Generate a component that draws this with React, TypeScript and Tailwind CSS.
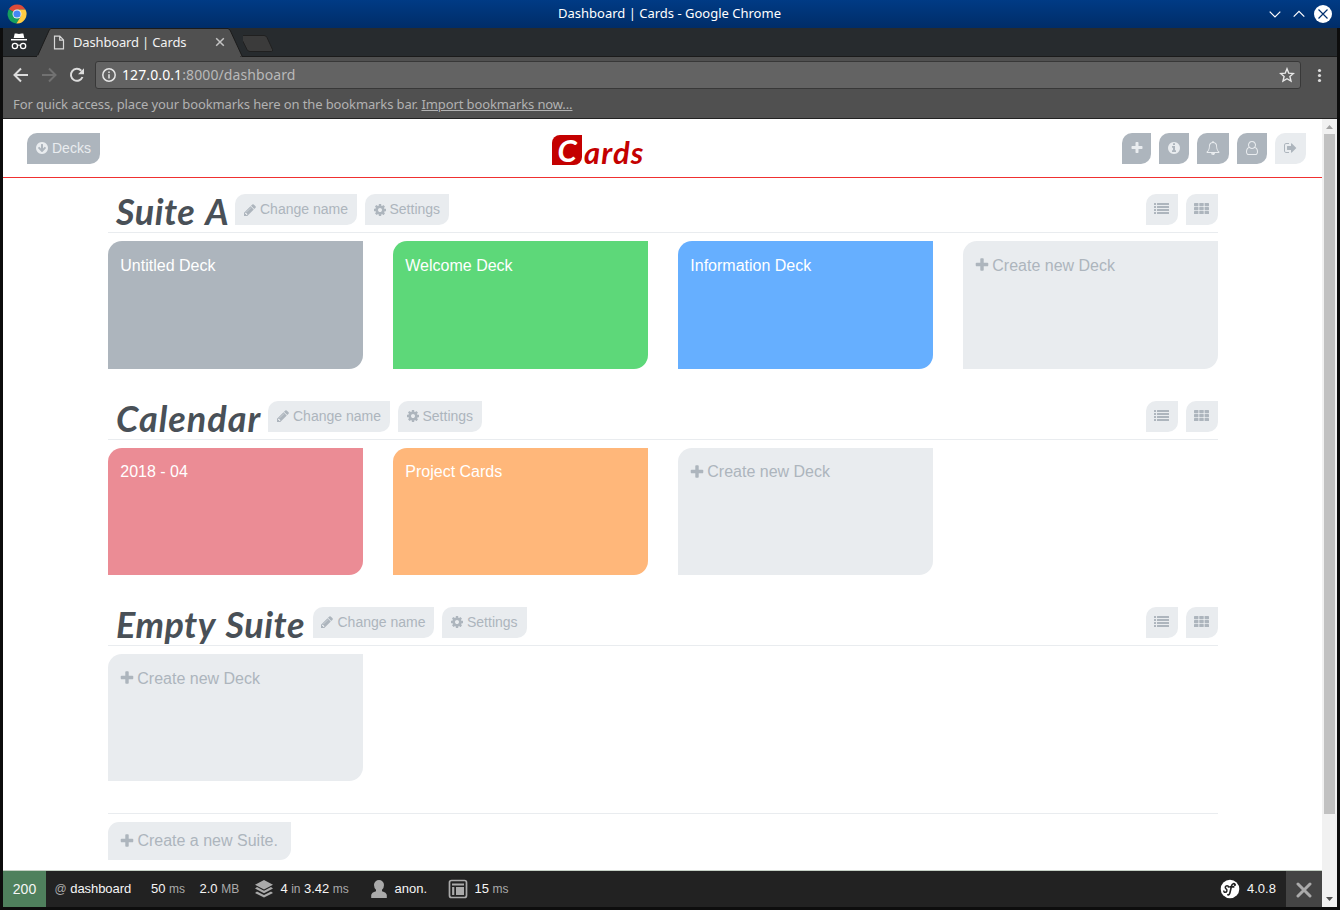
import React from "react";

const PLUS =
  "M1600 736v192q0 40-28 68t-68 28h-416v416q0 40-28 68t-68 28h-192q-40 0-68-28t-28-68v-416h-416q-40 0-68-28t-28-68v-192q0-40 28-68t68-28h416v-416q0-40 28-68t68-28h192q40 0 68 28t28 68v416h416q40 0 68 28t28 68z";
const INFO =
  "M1152 1376v-160q0-14-9-23t-23-9h-96v-512q0-14-9-23t-23-9h-320q-14 0-23 9t-9 23v160q0 14 9 23t23 9h96v320h-96q-14 0-23 9t-9 23v160q0 14 9 23t23 9h448q14 0 23-9t9-23zm-128-896v-160q0-14-9-23t-23-9h-192q-14 0-23 9t-9 23v160q0 14 9 23t23 9h192q14 0 23-9t9-23zm640 416q0 209-103 385.5t-279.5 279.5-385.5 103-385.5-103-279.5-279.5-103-385.5 103-385.5 279.5-279.5 385.5-103 385.5 103 279.5 279.5 103 385.5z";
const ARROW_DOWN =
  "M1412 897q0-27-18-45l-91-91q-18-18-45-18t-45 18l-189 189v-502q0-26-19-45t-45-19h-128q-26 0-45 19t-19 45v502l-189-189q-19-19-45-19t-45 19l-91 91q-18 18-18 45t18 45l362 362 91 91q18 18 45 18t45-18l91-91 362-362q18-18 18-45zm252-1q0 209-103 385.5t-279.5 279.5-385.5 103-385.5-103-279.5-279.5-103-385.5 103-385.5 279.5-279.5 385.5-103 385.5 103 279.5 279.5 103 385.5z";
const BELL =
  "M912 1696q0-16-16-16-59 0-101.5-42.5t-42.5-101.5q0-16-16-16t-16 16q0 73 51.5 124.5t124.5 51.5q16 0 16-16zm-666-288h1300q-266-300-266-832 0-51-24-105t-69-103-121.5-80.5-169.5-31.5-169.5 31.5-121.5 80.5-69 103-24 105q0 532-266 832zm1482 0q0 52-38 90t-90 38h-448q0 106-75 181t-181 75-181-75-75-181h-448q-52 0-90-38t-38-90q50-42 91-88t85-119.5 74.5-158.5 50-206 19.5-260q0-152 117-282.5t307-158.5q-8-19-8-39 0-40 28-68t68-28 68 28 28 68q0 20-8 39 190 28 307 158.5t117 282.5q0 139 19.5 260t50 206 74.5 158.5 85 119.5 91 88z";
const USER =
  "M1201 784q47 14 89.5 38t89 73 79.5 115.5 55 172 22 236.5q0 154-100 263.5t-241 109.5h-854q-141 0-241-109.5t-100-263.5q0-131 22-236.5t55-172 79.5-115.5 89-73 89.5-38q-79-125-79-272 0-104 40.5-198.5t109.5-163.5 163.5-109.5 198.5-40.5 198.5 40.5 163.5 109.5 109.5 163.5 40.5 198.5q0 147-79 272zm-433-656q-159 0-271.5 112.5t-112.5 271.5 112.5 271.5 271.5 112.5 271.5-112.5 112.5-271.5-112.5-271.5-271.5-112.5zm427 1536q88 0 150.5-71.5t62.5-173.5q0-239-78.5-377t-225.5-145q-145 127-336 127t-336-127q-147 7-225.5 145t-78.5 377q0 102 62.5 173.5t150.5 71.5h854z";
const SIGN_OUT =
  "M704 1440q0 4 1 20t.5 26.5-3 23.5-10 19.5-20.5 6.5h-320q-119 0-203.5-84.5t-84.5-203.5v-704q0-119 84.5-203.5t203.5-84.5h320q13 0 22.5 9.5t9.5 22.5q0 4 1 20t.5 26.5-3 23.5-10 19.5-20.5 6.5h-320q-66 0-113 47t-47 113v704q0 66 47 113t113 47h312l11.5 1 11.5 3 8 5.5 7 9 2 13.5zm928-544q0 26-19 45l-544 544q-19 19-45 19t-45-19-19-45v-288h-448q-26 0-45-19t-19-45v-384q0-26 19-45t45-19h448v-288q0-26 19-45t45-19 45 19l544 544q19 19 19 45z";
const PENCIL =
  "M491 1536l91-91-235-235-91 91v107h128v128h107zm523-928q0-22-22-22-10 0-17 7l-542 542q-7 7-7 17 0 22 22 22 10 0 17-7l542-542q7-7 7-17zm-54-192l416 416-832 832h-416v-416zm683 96q0 53-37 90l-166 166-416-416 166-165q36-38 90-38 53 0 91 38l235 234q37 39 37 91z";
const COG =
  "M1152 896q0-106-75-181t-181-75-181 75-75 181 75 181 181 75 181-75 75-181zm512-109v222q0 12-8 23t-20 13l-185 28q-19 54-39 91 35 50 107 138 10 12 10 25t-9 23q-27 37-99 108t-94 71q-12 0-26-9l-138-108q-44 23-91 38-16 136-29 186-7 28-36 28h-222q-14 0-24.5-8.5t-11.5-21.5l-28-184q-49-16-90-37l-141 107q-10 9-25 9-14 0-25-11-126-114-165-168-7-10-7-23 0-12 8-23 15-21 51-66.5t54-70.5q-27-50-41-99l-183-27q-13-2-21-12.5t-8-23.5v-222q0-12 8-23t19-13l186-28q14-46 39-92-40-57-107-138-10-12-10-24 0-10 9-23 26-36 98.5-107.5t94.5-71.5q13 0 26 10l138 107q44-23 91-38 16-136 29-186 7-28 36-28h222q14 0 24.5 8.5t11.5 21.5l28 184q49 16 90 37l142-107q9-9 24-9 13 0 25 10 129 119 165 170 7 8 7 22 0 12-8 23-15 21-51 66.5t-54 70.5q26 50 41 98l183 28q13 2 21 12.5t8 23.5z";

function Glyph({ d, className, box = "0 0 1792 1792" }: { d: string; className: string; box?: string }) {
  return (
    <svg viewBox={box} className={`shrink-0 ${className}`} fill="currentColor">
      <path d={d} />
    </svg>
  );
}

function ChromeLogo() {
  return (
    <svg viewBox="0 0 20 20" className="-mt-px size-5">
      <path d="M10 10 L1.8 5.3 A9.4 9.4 0 0 1 18.4 5.6 L10 5.6Z" fill="#dd4b39" />
      <path d="M10 10 L1.8 5.3 A9.4 9.4 0 0 0 9.4 19.4 L13.8 12.2Z" fill="#17a05d" />
      <path d="M10 5.6 H18.4 A9.4 9.4 0 0 1 9.4 19.4 L13.8 12.2Z" fill="#ffcd42" />
      <circle cx="10" cy="10" r="4.5" fill="#f1f1f1" />
      <circle cx="10" cy="10" r="3.6" fill="#4587f3" />
    </svg>
  );
}

function TitleBar() {
  return (
    <div className="flex h-7 shrink-0 items-center bg-gradient-to-b from-[#003b85] to-[#002d68] pr-2 pl-[7px] text-white">
      <div className="flex w-[70px]"><ChromeLogo /></div>
      <div className="flex-1 pb-px text-center text-[13px]">Dashboard | Cards - Google Chrome</div>
      <div className="-mt-px flex w-[70px] items-center justify-end">
        <svg viewBox="0 0 64 20" className="h-5 w-16" fill="none" stroke="#fff" strokeWidth="1.2">
          <path d="M1.7 7.6 7 12.9l5.3-5.3M25.7 12.6 31 7.3l5.3 5.3" />
          <circle cx="55" cy="10" r="9" fill="#fff" stroke="none" />
          <path d="M50.5 5.5l9 9M59.5 5.5l-9 9" stroke="#003070" />
        </svg>
      </div>
    </div>
  );
}

function TabStrip() {
  return (
    <div className="flex h-[29px] shrink-0 bg-[#272b2e] shadow-[inset_0_-1px_0_#1b1b1b]">
      <svg viewBox="0 0 36 29" className="h-[29px] w-9" fill="none">
        <path d="M11.7 5.5h1.7l2.6.6 2.600-.6h1.7l1 4.500H10.700z" fill="#fff" />
        <path d="M8 11.7h16" stroke="#fff" strokeWidth="1.5" />
        <circle cx="11.9" cy="18" r="2.6" stroke="#fff" strokeWidth="1.3" />
        <circle cx="20.1" cy="18" r="2.6" stroke="#fff" strokeWidth="1.3" />
        <path d="M14.5 17.5q1.500-1 3 0" stroke="#fff" />
      </svg>
      <div className="relative -ml-1 h-[29px] w-[208px]">
        <svg viewBox="0 0 208 29" className="absolute inset-0 h-full w-full">
          <path d="M0 29 2.5 28 14.5 1.5 16 .5H193l2 1.5L207 28l1 1z" fill="#505050" stroke="#1b1b1b" />
          <path d="M2 28.500h203" stroke="#505050" strokeWidth="2" />
        </svg>
        <div className="relative flex h-full items-center pl-[18px] text-[13px] text-[#f2f2f2]">
          <svg viewBox="0 0 12 15" className="mr-[8px] h-[15px] w-3" fill="none" stroke="#d8d8d8" strokeWidth="1.2">
            <path d="M1.5 1.2h5.3l3.7 3.7v8.900h-9zM6.700 1.200v4h3.800" />
          </svg>
          <span className="w-[142px] pt-px tracking-[-0.16px]">Dashboard | Cards</span>
          <svg viewBox="0 0 10 10" className="-mt-px size-2.5" stroke="#c4c4c4" strokeWidth="1.5"><path d="m1.2 1.2 7.6 7.6m0-7.6L1.2 8.800" /></svg>
        </div>
      </div>
      <svg viewBox="0 0 36 29" className="h-[29px] w-9">
        <path d="M-1.5 7.500H21q2 0 3 2l5.500 12q.5 2-1 2H7q-2 0-3-2l-6-12z" fill="#3b3b3b" stroke="#202020" />
      </svg>
    </div>
  );
}

function AddressBar() {
  return (
    <div className="flex h-[33px] shrink-0 bg-[#505050]">
      <svg viewBox="0 0 92 33" className="h-[33px] w-[92px]" fill="none" strokeWidth="2">
        <path d="M25 18H12M18 11.500 11.500 18l6.500 6.500" stroke="#dcdcdc" />
        <path d="M39 18h13M46 11.500l6.500 6.500-6.500 6.500" stroke="#717171" />
        <path d="M79.500 20a6 6 0 1 1-1.200-6.300" stroke="#dcdcdc" />
        <path d="M81 11.300v6h-6z" fill="#dcdcdc" />
      </svg>
      <div className="mt-1 flex h-[28px] w-[1206px] items-center rounded-[3px] border border-[#383838] bg-[#636363] pr-[5px] pl-1.5 text-[14px]">
        <svg viewBox="0 0 14 14" className="mr-1.5 size-3.5" fill="none" stroke="#e6e6e6" strokeWidth="1.5">
          <circle cx="7" cy="7" r="6.2" /><path d="M7 6.200v4.300M7 3.400v1.600" />
        </svg>
        <span className="pb-0.5 tracking-[0.1px] text-white">127.0.0.1</span>
        <span className="flex-1 pb-0.5 tracking-[0.1px] text-[#b9b9b9]">:8000/dashboard</span>
        <svg viewBox="0 0 16 16" className="size-4" fill="none" stroke="#e8e8e8" strokeWidth="1.4">
          <path d="m8 1.800 1.700 4.300 4.700.4-3.500 3 1.100 4.600L8 11.700l-4 2.400 1.100-4.600-3.500-3 4.700-.4z" />
        </svg>
      </div>
      <svg viewBox="0 0 36 33" className="h-[33px] w-9" fill="#dcdcdc">
        <circle cx="18.5" cy="13.5" r="1.6" /><circle cx="18.5" cy="18.5" r="1.6" /><circle cx="18.5" cy="23.5" r="1.6" />
      </svg>
    </div>
  );
}

function LeafButton({ className, children }: { className: string; children: React.ReactNode }) {
  return (
    <button className={`flex h-[31px] items-center rounded-tl-[10px] rounded-br-[10px] text-[14px] whitespace-nowrap ${className}`}>
      {children}
    </button>
  );
}

function Header() {
  return (
    <header className="flex h-[59px] shrink-0 items-center border-b border-[#f03030] pr-4 pl-6">
      <LeafButton className="w-[73px] bg-[#adb5bd] pl-2 text-[#e9ecef]">
        <Glyph d={ARROW_DOWN} className="mr-[3px] size-3.5" />
        Decks
      </LeafButton>
      <div className="ml-[452px] flex h-[31px] items-start pt-0.5 font-[Lato] text-[31px] leading-[30px] font-bold text-[#c40000] italic">
        <span className="mr-[2px] flex h-[30px] w-[30px] justify-center rounded-tl-lg rounded-br-lg bg-[#c40000] text-white">C</span>
        <span className="pt-[2px] text-[31px] tracking-[1.1px]">ards</span>
      </div>
      <div className="ml-auto flex gap-2">
        <LeafButton className="w-[29px] justify-center bg-[#adb5bd] text-[#e9ecef]"><Glyph d={PLUS} className="size-3.5" /></LeafButton>
        <LeafButton className="w-[30px] justify-center bg-[#adb5bd] text-[#e9ecef]"><Glyph d={INFO} className="size-3.5" /></LeafButton>
        <LeafButton className="w-8 justify-center bg-[#adb5bd] text-[#e9ecef]"><Glyph d={BELL} className="size-3.5" /></LeafButton>
        <LeafButton className="w-[30px] justify-center bg-[#adb5bd] text-[#e9ecef]"><Glyph d={USER} box="-128 0 1792 1792" className="size-3.5" /></LeafButton>
        <LeafButton className="w-[31px] justify-center bg-[#e9ecef] text-[#adb5bd]"><Glyph d={SIGN_OUT} box="64 0 1792 1792" className="size-3.5" /></LeafButton>
      </div>
    </header>
  );
}

function ListIcon() {
  return (
    <svg viewBox="0 0 15 11" className="h-[11px] w-[15px]" fill="currentColor">
      {[0, 3, 6, 9].map((y) => (
        <g key={y}><rect x="0" y={y} width="2" height="2" rx=".3" /><rect x="3" y={y} width="12" height="2" rx=".3" /></g>
      ))}
    </svg>
  );
}

function GridIcon() {
  return (
    <svg viewBox="0 0 15 11" className="h-[11px] w-[15px]" fill="currentColor">
      {[0, 4, 8].map((y) => (
        <g key={y}>
          <rect x="0" y={y} width="4.4" height="3.200" rx=".6" /><rect x="5.300" y={y} width="4.400" height="3.200" rx=".6" /><rect x="10.600" y={y} width="4.400" height="3.200" rx=".6" />
        </g>
      ))}
    </svg>
  );
}

type Deck = { name: string; color: string };

function Suite({ name, titleClass, decks }: { name: string; titleClass: string; decks: Deck[] }) {
  return (
    <section className="mb-[23.85px]">
      <div className="flex h-[47px] items-start border-b border-[#e9ecef] pt-2 pl-2">
        <h2 className={`font-[Lato] text-[36px] leading-[35px] font-bold whitespace-nowrap text-[#495057] italic ${titleClass}`}>{name}</h2>
        <LeafButton className="mr-2 w-[121.5px] bg-[#e9ecef] pl-2 text-[#adb5bd]">
          <Glyph d={PENCIL} className="mr-[3.5px] -ml-[0.5px] size-3.5" />
          Change name
        </LeafButton>
        <LeafButton className="mr-auto w-[84.5px] bg-[#e9ecef] pl-2 text-[#adb5bd]">
          <Glyph d={COG} className="mr-[3px] size-3.5" />
          Settings
        </LeafButton>
        <LeafButton className="mr-2 w-8 justify-center bg-[#e9ecef] pr-px pb-0.5 text-[#adb5bd]"><ListIcon /></LeafButton>
        <LeafButton className="w-8 justify-center bg-[#e9ecef] pr-px pb-0.5 text-[#adb5bd]"><GridIcon /></LeafButton>
      </div>
      <div className="mt-2 grid grid-cols-4 gap-[30px]">
        {decks.map((deck) => (
          <div key={deck.name} className={`h-[127.5px] rounded-tl-[14px] rounded-br-[14px] pt-[12.7px] pl-[12.3px] text-base leading-6 text-white ${deck.color}`}>
            {deck.name}
          </div>
        ))}
        <div className="flex h-[127.5px] rounded-tl-[14px] rounded-br-[14px] bg-[#e9ecef] pt-[12.7px] pl-3 text-base leading-6 text-[#adb5bd]">
          <Glyph d={PLUS} className="mt-[3.5px] -ml-[1.5px] mr-[2.8px] size-4" />
          Create new Deck
        </div>
      </div>
    </section>
  );
}

function DebugToolbar() {
  return (
    <footer className="flex h-[37px] shrink-0 items-center border-t border-[#c5d0c5] bg-[#222] text-[13px] text-[#f5f5f5]">
      <div className="flex h-full w-[43px] items-center justify-center bg-[#4f805d] text-sm">200</div>
      <span className="ml-[8.5px] w-[96.5px] tracking-[-0.05px]"><span className="text-xs text-[#aaa]">@</span> dashboard</span>
      <span className="w-[48.5px]">50 <span className="text-xs text-[#aaa]">ms</span></span>
      <span className="w-[54.5px]">2.0 <span className="text-xs text-[#aaa]">MB</span></span>
      <svg viewBox="0 0 20 18" className="mr-[6.5px] h-[18px] w-5" fill="#aaa">
        <path d="M10 0 19 4.700 10 9.400 1 4.700zM3 7.100l7 3.600 7-3.600 2 1.500-9 4.700-9-4.700zM3 11.400 10 15l7-3.600 2 1.500L10 17.600 1 12.900z" />
      </svg>
      <span className="w-[90px] tracking-[-0.05px]">4 <span className="text-xs text-[#aaa]">in</span> 3.42 <span className="text-xs text-[#aaa]">ms</span></span>
      <svg viewBox="0 0 16 18" className="mr-[8px] h-[18px] w-4" fill="#aaa">
        <path d="M8 0a5 5 0 0 1 5 5q0 3-2 4.700v1.500q4.500 1.300 4.800 3.800V18H.2v-3q.3-2.500 4.800-3.800V9.700Q3 8 3 5a5 5 0 0 1 5-5z" />
      </svg>
      <span className="w-[53px]">anon.</span>
      <svg viewBox="0 0 20 20" className="mr-[7px] size-5" fill="none" stroke="#aaa" strokeWidth="1.7">
        <rect x="1.5" y="1.5" width="17" height="17" rx="2" />
        <path d="M4 5.500h12M5.200 8v8" strokeWidth="2.2" /><path d="M8 8h8v8H8z" fill="#aaa" stroke="none" />
      </svg>
      <span className="flex-1">15 <span className="text-xs text-[#aaa]">ms</span></span>
      <svg viewBox="0 0 20 20" className="mr-[7px] size-5">
        <circle cx="10" cy="10" r="9.3" fill="#fff" />
        <path d="M8.300 8Q8.600 6.700 7 6.700c-1.700 0-2.300 1.800-1.100 2.900 1.900 1.500 1 3.700-.7 3.700-1 0-1.500-.6-1.300-1.200" fill="none" stroke="#222" strokeWidth="1.5" strokeLinecap="round" />
        <path d="M15 5.700c-.4-1.700-2.900-1.300-3.500 1.300l-1.500 6.500q-.6 2.700-2.200 2.300M9.800 7.900h4" fill="none" stroke="#222" strokeWidth="1.6" strokeLinecap="round" />
        <circle cx="14.8" cy="6" r="1.1" fill="#222" />
      </svg>
      <span className="w-[39px]">4.0.8</span>
      <div className="flex h-full w-9 items-center justify-center bg-[#444] pt-0.5">
        <svg viewBox="0 0 16 16" className="size-4" stroke="#aaa" strokeWidth="3" strokeLinecap="round"><path d="m2 2 12 12m0-12L2 14" /></svg>
      </div>
    </footer>
  );
}

export default function App() {
  return (
    <div className="flex h-[910px] w-[1340px] flex-col overflow-hidden bg-[#0d0d0d] font-['Noto_Sans',sans-serif]">
      <TitleBar />
      <div className="mx-[3px] flex h-[879px] flex-col">
        <TabStrip />
        <AddressBar />
        <div className="h-[29px] shrink-0 border-b border-[#222] bg-[#505050] pt-1 pl-2.5 text-[13px] leading-5 tracking-[-0.115px] text-[#b2b2b2]">
          For quick access, place your bookmarks here on the bookmarks bar. <span className="underline">Import bookmarks now...</span>
        </div>
        <div className="flex h-[788px] font-['Liberation_Sans',sans-serif]">
          <div className="flex w-[1319px] flex-col bg-white">
            <Header />
            <main className="h-[692px] overflow-hidden pt-[8.2px] pr-[104px] pl-[105px]">
              <Suite
                name="Suite A"
                titleClass="w-[119px] tracking-[0.5px] [word-spacing:2.5px]"
                decks={[
                  { name: "Untitled Deck", color: "bg-[#adb5bd]" },
                  { name: "Welcome Deck", color: "bg-[#5dd879]" },
                  { name: "Information Deck", color: "bg-[#66afff]" },
                ]}
              />
              <Suite
                name="Calendar"
                titleClass="w-[152px] tracking-[1px]"
                decks={[
                  { name: "2018 - 04", color: "bg-[#eb8c95]" },
                  { name: "Project Cards", color: "bg-[#ffb77a]" },
                ]}
              />
              <Suite name="Empty Suite" titleClass="w-[196.5px] tracking-[0.5px] [word-spacing:2px]" decks={[]} />
              <div className="mt-[31.5px] border-t border-[#e9ecef] pt-2">
                <button className="flex h-[38px] w-[183px] items-center rounded-tl-[11px] rounded-br-[11px] bg-[#e9ecef] pl-[10.5px] text-base whitespace-nowrap text-[#adb5bd]">
                  <Glyph d={PLUS} className="mr-[2.9px] size-4" />
                  Create a new Suite.
                </button>
              </div>
            </main>
            <DebugToolbar />
          </div>
          <div className="flex w-[15px] flex-col items-center bg-[#f1f1f1]">
            <svg viewBox="0 0 15 15" className="h-[15px] w-[15px]"><path d="M4 10h7L7.500 6z" fill="#a3a3a3" /></svg>
            <div className="h-[680px] w-[11px] bg-[#c1c1c1]" />
            <svg viewBox="0 0 15 15" className="mt-auto h-[15px] w-[15px]"><path d="M4 5h7L7.500 9z" fill="#505050" /></svg>
          </div>
        </div>
      </div>
    </div>
  );
}
